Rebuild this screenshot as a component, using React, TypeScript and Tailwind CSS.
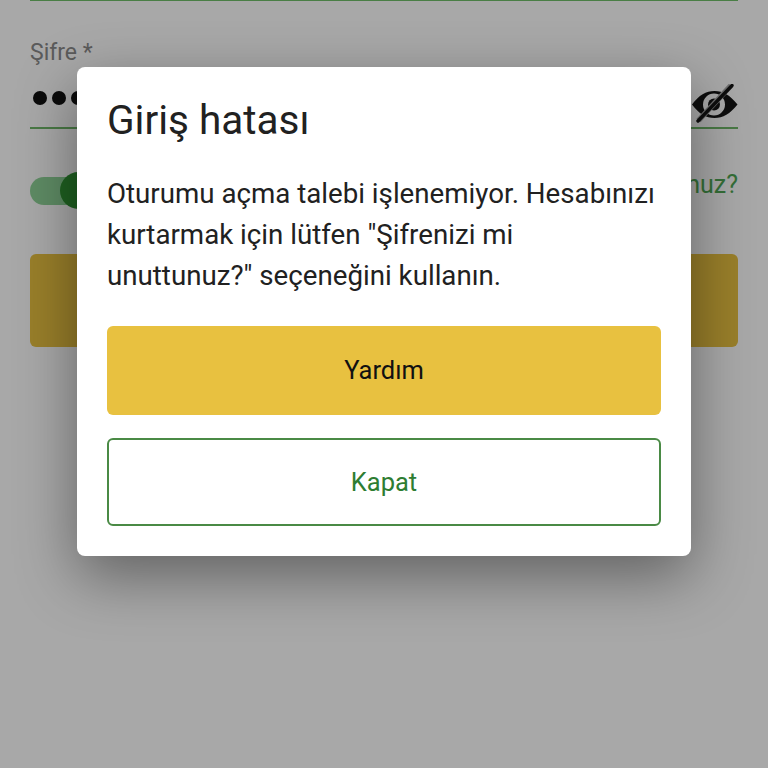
export default function App() {
  return (
    <div className="relative h-[768px] w-[768px] overflow-hidden bg-white font-['Roboto',sans-serif]">
      {/* Login form behind the dialog */}
      <div className="flex flex-col px-[30px]">
        <div className="h-px bg-[#6fc06a]" />
        <div className="mt-[39px] text-[23px] leading-[26px] text-[#8a8a8a]">Şifre *</div>
        <div className="flex h-[63px] items-center justify-between border-b-2 border-[#6fb86a]">
          <div className="ml-[3px] mt-[2px] flex gap-[5px]">
            <span className="h-[14px] w-[14px] rounded-full bg-[#111111]" />
            <span className="h-[14px] w-[14px] rounded-full bg-[#111111]" />
            <span className="h-[14px] w-[14px] rounded-full bg-[#111111]" />
          </div>
          <svg viewBox="0 0 48 42" className="mt-[17px] h-[42px] w-[48px]">
            <path
              fillRule="evenodd"
              fill="#151515"
              d="M2 20.5C9 11 16 7 24.5 7S40 11 47.5 20.5C40 30 33 34 24.5 34S9 30 2 20.5ZM24 9.5a11 11 0 1 0 0 22 11 11 0 0 0 0-22Z"
            />
            <circle cx="24" cy="20.5" r="6" fill="#151515" />
            <path d="M41 1.5 8.5 36.5" stroke="#a8a8a8" strokeWidth="5.5" />
            <path d="M42 1.5 8 37" stroke="#151515" strokeWidth="3.4" strokeLinecap="round" />
          </svg>
        </div>
        <div className="mt-[42px] flex h-[40px] items-center justify-between">
          <div className="relative h-[28px] w-[62px] rounded-full bg-[#8fd498]">
            <span className="absolute left-[30px] top-[-5px] h-[37px] w-[37px] rounded-full bg-[#2f9432]" />
          </div>
          <span className="mb-[12px] text-[25px] leading-[30px] text-[#4fa854]">Şifrenizi mi unuttunuz?</span>
        </div>
        <div className="mt-[43px] h-[93px] rounded-[6px] bg-[#e8c140]" />
      </div>

      {/* Scrim + dialog */}
      <div className="absolute inset-0 flex items-start justify-center bg-black/[0.34] pt-[67px]">
        <div className="flex h-[489px] w-[614px] flex-col rounded-[8px] bg-white px-[30px] pt-[30px] shadow-[0_20px_60px_rgba(0,0,0,0.42)]">
          <h2 className="text-[40.5px] leading-[46px] text-[#212121]">Giriş hatası</h2>
          <p className="mt-[30px] text-[27.7px] leading-[41px] text-[#212121]">
            Oturumu açma talebi işlenemiyor. Hesabınızı kurtarmak için lütfen "Şifrenizi mi
            unuttunuz?" seçeneğini kullanın.
          </p>
          <button className="mt-[30px] h-[89px] rounded-[6px] bg-[#e8c140] text-[25.5px] text-[#111111]">
            Yardım
          </button>
          <button className="mt-[23px] h-[88px] rounded-[6px] border-2 border-[#4a8a45] bg-white text-[25.5px] text-[#2e7d32]">
            Kapat
          </button>
        </div>
      </div>
    </div>
  );
}
